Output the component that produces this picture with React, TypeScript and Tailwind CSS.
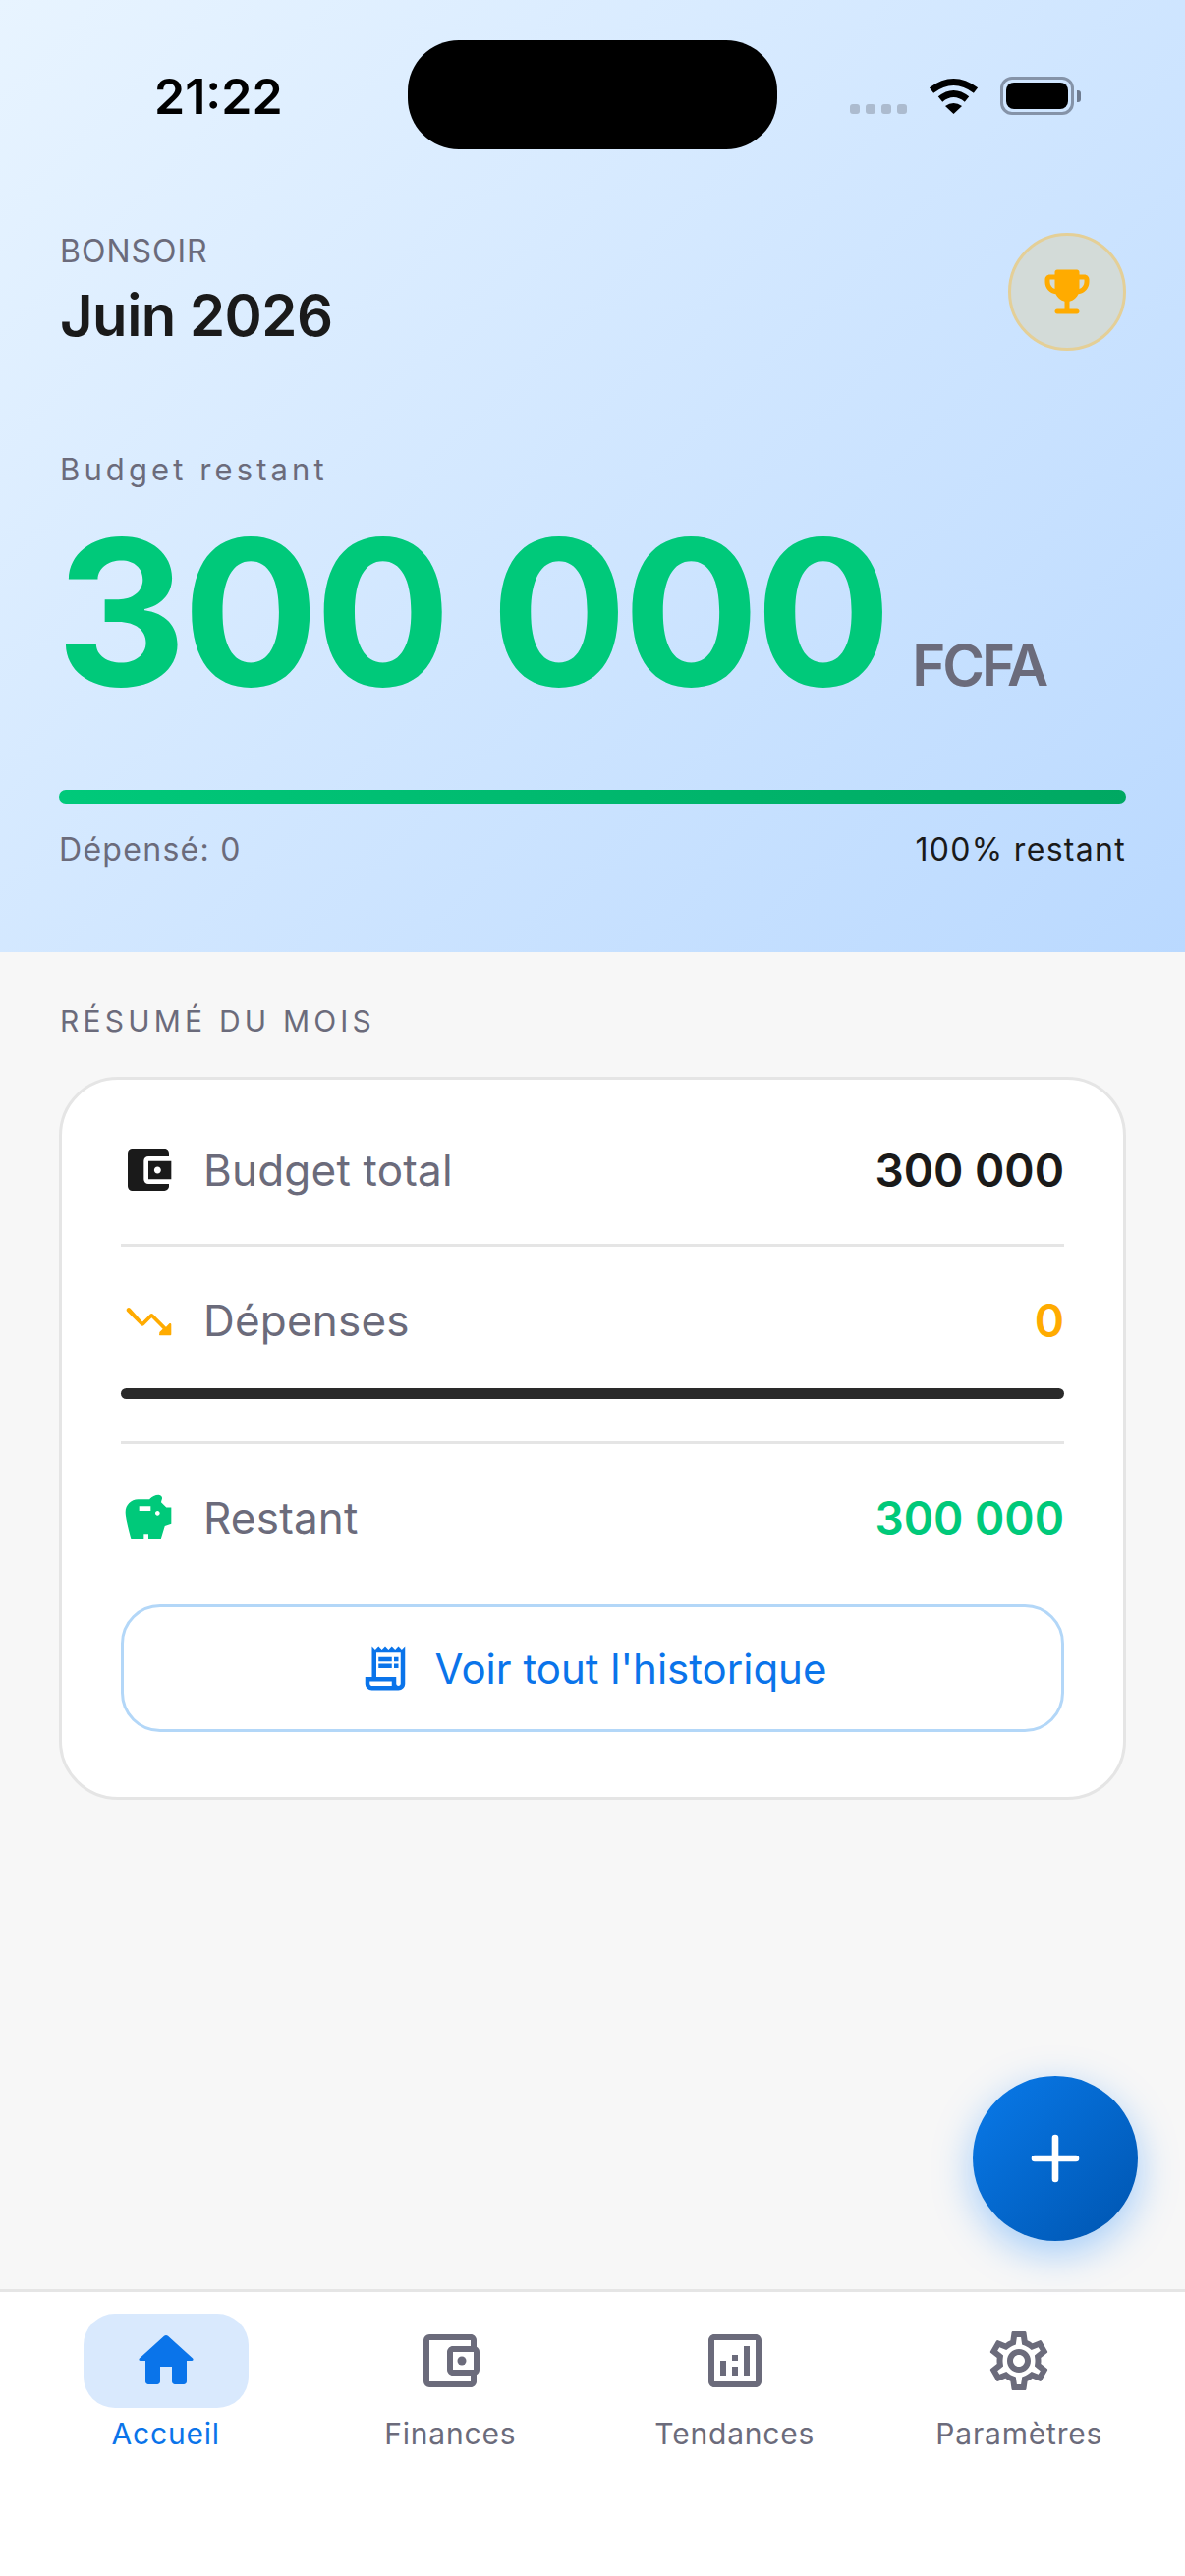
import { MdAccountBalanceWallet, MdOutlineAccountBalanceWallet, MdOutlineReceiptLong, MdOutlineSettings, MdSavings } from "react-icons/md";

const trophyPath = "M19 5h-2V4c0-.55-.45-1-1-1H8c-.55 0-1 .45-1 1v1H5c-1.1 0-2 .9-2 2v1c0 2.55 1.92 4.63 4.39 4.94.63 1.5 1.98 2.63 3.61 2.96V19H8c-.55 0-1 .45-1 1s.45 1 1 1h8c.55 0 1-.45 1-1s-.45-1-1-1h-3v-3.1c1.63-.33 2.98-1.46 3.61-2.96C19.08 12.63 21 10.55 21 8V7c0-1.1-.9-2-2-2zM5 8V7h2v3.82C5.84 10.4 5 9.3 5 8zm14 0c0 1.3-.84 2.4-2 2.82V7h2v1z";
const trendPath = "M16.85 17.15l1.44-1.44-4.88-4.88-3.29 3.29c-.39.39-1.02.39-1.41 0l-6-6.01c-.39-.39-.39-1.02 0-1.41.39-.39 1.02-.39 1.41 0L9.41 12.59l3.29-3.29c.39-.39 1.02-.39 1.41 0l5.59 5.58 1.44-1.44c.31-.31.85-.09.85.35v4.29c0 .28-.22.5-.5.5H17.2c-.44.01-.66-.53-.35-.84z";
const homePath = "M10 19v-5h4v5c0 .55.45 1 1 1h3c.55 0 1-.45 1-1v-7h1.7c.46 0 .68-.57.33-.87L12.67 3.6c-.38-.34-.96-.34-1.34 0l-8.36 7.53c-.34.3-.13.87.33.87H5v7c0 .55.45 1 1 1h3c.55 0 1-.45 1-1z";
const chartPath = "M19 3H5c-1.1 0-2 .9-2 2v14c0 1.1.9 2 2 2h14c1.1 0 2-.9 2-2V5c0-1.1-.9-2-2-2zm0 16H5V5h14v14zM7 12h2v5H7zm8-5h2v10h-2zm-4 7h2v3h-2zm0-4h2v2h-2z";

function StatusBar() {
  return (
    <div className="h-[235px] flex justify-between items-start pt-[68px]">
      <span className="ml-[97px] text-[50px] leading-[60px] font-semibold text-black">21:22</span>
      <div className="absolute left-[415px] top-[41px] w-[376px] h-[111px] rounded-[52px] bg-black" />
      <div className="mr-[46px] mt-[10px] flex items-start">
        <div className="mt-[28px] flex gap-[6px]">
          <div className="w-[10px] h-[10px] rounded-[3px] bg-[#acbbcf]" />
          <div className="w-[10px] h-[10px] rounded-[3px] bg-[#acbbcf]" />
          <div className="w-[10px] h-[10px] rounded-[3px] bg-[#acbbcf]" />
          <div className="w-[10px] h-[10px] rounded-[3px] bg-[#acbbcf]" />
        </div>
        <svg className="ml-[22px]" width="51" height="38" viewBox="0 0 51 38">
          <path d="M3 14 Q25.5 -3 48 14" fill="none" stroke="#000" strokeWidth="7" />
          <path d="M12 23 Q25.5 12 39 23" fill="none" stroke="#000" strokeWidth="7" />
          <path d="M25.5 38 L17 30 Q25.5 24 34 30 Z" fill="#000" />
        </svg>
        <div className="ml-[22px] flex items-center">
          <div className="w-[75px] h-[39px] rounded-[12px] border-[3px] border-[#8593a8] p-[3px]">
            <div className="w-full h-full rounded-[8px] bg-black" />
          </div>
          <div className="ml-[3px] w-[4px] h-[12px] rounded-r-[3px] bg-[#6f7c90]" />
        </div>
      </div>
    </div>
  );
}

function Row({ icon, label, value, valueClass }: { icon: React.ReactNode; label: string; value: string; valueClass: string }) {
  return (
    <div className="h-[110px] flex items-center">
      <div className="w-[56px] h-[56px] flex items-center justify-center">{icon}</div>
      <span className="ml-[28px] text-[44px] text-[#6b6b7b] tracking-[0.2px]">{label}</span>
      <span className={"ml-auto text-[46px] font-semibold " + valueClass}>{value}</span>
    </div>
  );
}

function NavItem({ icon, label, active }: { icon: React.ReactNode; label: string; active?: boolean }) {
  return (
    <div className="flex-1 flex flex-col items-center">
      <div className={"w-[168px] h-[96px] rounded-[32px] flex items-center justify-center " + (active ? "bg-[#d9e9fd]" : "")}>
        {icon}
      </div>
      <span className={"mt-[8px] text-[30px] leading-[36px] tracking-[0.8px] " + (active ? "text-[#0a74ea]" : "text-[#6b6b7b]")}>{label}</span>
    </div>
  );
}

export default function App() {
  return (
    <div className="relative w-[1206px] h-[2622px] overflow-hidden flex flex-col bg-[#f7f7f7] [font-family:Inter,sans-serif]">
      <section className="h-[969px] px-[60px] bg-linear-[135deg,#e8f4ff,#bad9ff]">
        <StatusBar />
        <div className="flex justify-between items-start">
          <div className="pl-[1px]">
            <div className="mt-[1px] text-[32px] leading-[40px] tracking-[1px] text-[#6b6b7b]">BONSOIR</div>
            <div className="mt-[13px] text-[58px] leading-[64px] font-semibold tracking-[-0.5px] text-[#1a1a1a]">Juin 2026</div>
          </div>
          <div className="mt-[2px] w-[120px] h-[120px] rounded-full border-[3px] border-[#e4cf97] bg-[#d3dbd8] flex items-center justify-center">
            <svg width="60" height="60" viewBox="0 0 24 24" fill="#ffab00"><path d={trophyPath} /></svg>
          </div>
        </div>
        <div className="mt-[101px] pl-[1px] text-[31px] leading-[40px] tracking-[4.1px] text-[#6b6b7b]">Budget restant</div>
        <div className="mt-[25px] -ml-[3px] flex items-baseline">
          <span className="text-[206px] leading-[200px] font-bold tracking-[-4.3px] text-[#00c97a]">300 000</span>
          <span className="ml-[25px] text-[58px] font-semibold tracking-[-3px] text-[#6b6b7b]">FCFA</span>
        </div>
        <div className="mt-[81px] h-[14px] rounded-full bg-gradient-to-r from-[#00c97a] to-[#00a862]" />
        <div className="mt-[27px] flex justify-between text-[32px] leading-[40px] tracking-[1.3px]">
          <span className="text-[#6b6b7b]">Dépensé: 0</span>
          <span className="text-[#1a1a1a]">100% restant</span>
        </div>
      </section>

      <main className="flex-1 px-[60px] pt-[50px]">
        <div className="pl-[1px] text-[30px] leading-[40px] tracking-[4.2px] text-[#6b6b7b]">RÉSUMÉ DU MOIS</div>
        <div className="mt-[37px] rounded-[60px] border-[3px] border-[#e5e5e5] bg-white px-[60px] pt-[37px] pb-[66px]">
          <Row
            icon={<MdAccountBalanceWallet size={56} className="text-[#1a1a1a]" />}
            label="Budget total"
            value="300 000"
            valueClass="text-[#1a1a1a]"
          />
          <div className="mt-[20px] h-[3px] bg-[#e5e5e5]" />
          <div className="mt-[20px]">
            <Row
              icon={<svg width="56" height="56" viewBox="0 0 24 24" fill="#ffab00"><path d={trendPath} /></svg>}
              label="Dépenses"
              value="0"
              valueClass="text-[#ffab00]"
            />
          </div>
          <div className="mt-[14px] h-[11px] rounded-full bg-[#2a2a2a]" />
          <div className="mt-[43px] h-[3px] bg-[#e5e5e5]" />
          <div className="mt-[20px]">
            <Row
              icon={<MdSavings size={56} className="text-[#00c97a]" />}
              label="Restant"
              value="300 000"
              valueClass="text-[#00c97a]"
            />
          </div>
          <div className="mt-[33px] h-[130px] rounded-[40px] border-[3px] border-[#b3d7f8] flex items-center justify-center gap-[24px]">
            <MdOutlineReceiptLong size={54} className="text-[#0a74ea]" />
            <span className="text-[42px] text-[#0a74ea]">Voir tout l'historique</span>
          </div>
        </div>
      </main>

      <button className="absolute left-[990px] top-[2113px] w-[168px] h-[168px] rounded-full bg-gradient-to-br from-[#0a7aea] to-[#0055b0] shadow-[0_12px_40px_rgba(0,122,255,0.35)] flex items-center justify-center">
        <svg width="72" height="72" viewBox="0 0 24 24" fill="none" stroke="#fff" strokeWidth="2.2" strokeLinecap="round">
          <path d="M5 12h14M12 5v14" />
        </svg>
      </button>

      <nav className="h-[292px] border-t-[3px] border-[#e5e5e5] bg-white px-[24px] pt-[22px] flex">
        <NavItem active label="Accueil" icon={<svg width="72" height="72" viewBox="0 0 24 24" fill="#0a74ea"><path d={homePath} /></svg>} />
        <NavItem label="Finances" icon={<MdOutlineAccountBalanceWallet size={72} className="text-[#6b6b7b]" />} />
        <NavItem label="Tendances" icon={<svg width="72" height="72" viewBox="0 0 24 24" fill="#6b6b7b"><path d={chartPath} /></svg>} />
        <NavItem label="Paramètres" icon={<MdOutlineSettings size={72} className="text-[#6b6b7b]" />} />
      </nav>
    </div>
  );
}
